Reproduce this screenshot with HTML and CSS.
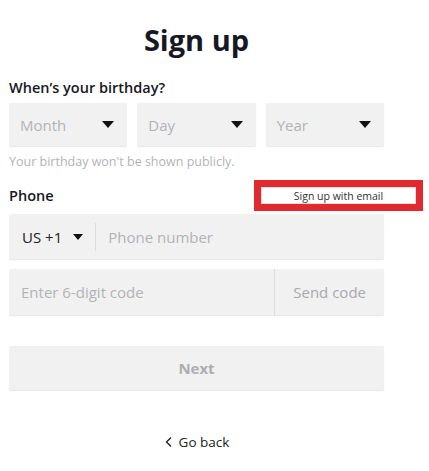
FILE: index.html
```html
<!DOCTYPE html>
<html lang="en">
<head>
  <meta charset="UTF-8" />
  <meta name="viewport" content="width=device-width, initial-scale=1.0" />
  <title>Sign up</title>
  <link rel="stylesheet" href="styles.css">
</head>
<body>
  <div class="page">
    <h1>Sign up</h1>

    <div class="label">When’s your birthday?</div>
    <div class="birthday">
      <div class="select"><span>Month</span><span class="caret"></span></div>
      <div class="select"><span>Day</span><span class="caret"></span></div>
      <div class="select"><span>Year</span><span class="caret"></span></div>
    </div>
    <div class="hint">Your birthday won't be shown publicly.</div>

    <div class="phone-head">
      <div class="label">Phone</div>
      <div class="email-link"><span>Sign up with email</span></div>
    </div>

    <div class="field">
      <div class="country">US +1 <span class="caret"></span></div>
      <div class="placeholder">Phone number</div>
    </div>

    <div class="field code">
      <div class="placeholder">Enter 6-digit code</div>
      <div class="send">Send code</div>
    </div>

    <button class="next">Next</button>

    <div class="back">
      <svg width="10" height="12" viewBox="0 0 10 12"><path d="M7 1.5 L2.5 6 L7 10.5" fill="none" stroke="#222" stroke-width="1.4"/></svg>
      Go back
    </div>
  </div>
</body>
</html>
```

FILE: styles.css
```css
:root {
  --field-bg: #f1f1f2;
  --field-edge: #e6e6e8;
  --muted: #b3b3b6;
  --text: #161823;
  --font: 'Open Sans', sans-serif;
}

body {
  margin: 0;
  font-family: var(--font);
  color: var(--text);
  background: white;
}

.page {
  width: 375px;
  padding: 0 9px;
}

h1 {
  margin: 21px 0 19px;
  font-size: 29px;
  font-weight: 700;
  text-align: center;
  line-height: 38px;
}

.label {
  font-size: 14.5px;
  font-weight: 600;
  line-height: 20px;
}

.birthday {
  display: flex;
  gap: 10px;
  margin-top: 5px;
}

.select {
  flex: 1;
  height: 43px;
  background: var(--field-bg);
  border-radius: 2px;
  box-shadow: 0 1px 1px var(--field-edge);
  display: flex;
  align-items: center;
  justify-content: space-between;
  padding: 0 13px 0 11px;
  color: var(--muted);
  font-size: 15px;
}

.caret {
  display: inline-block;
  width: 0;
  height: 0;
  border-left: 6px solid transparent;
  border-right: 6px solid transparent;
  border-top: 7px solid #111;
}

.hint {
  margin-top: 7px;
  font-size: 12.5px;
  color: var(--muted);
  line-height: 18px;
}

.phone-head {
  display: flex;
  justify-content: space-between;
  align-items: center;
  margin-top: 9px;
  margin-right: -39px;
}

.email-link {
  border: 7px solid #e12a2f;
  width: 155px;
  height: 17px;
  display: flex;
  align-items: center;
  justify-content: center;
  font-size: 10.5px;
  color: #333;
  box-shadow: inset 0 0 0 1px #ddd;
}

.field {
  margin-top: 3px;
  height: 45px;
  background: var(--field-bg);
  border-radius: 2px;
  box-shadow: 0 1px 1px var(--field-edge);
  display: flex;
  align-items: center;
  font-size: 15px;
}

.country {
  display: flex;
  align-items: center;
  gap: 11px;
  padding: 0 12px 0 13px;
  height: 28px;
  border-right: 1px solid #dcdcde;
  color: #222;
}

.country .caret {
  border-left-width: 5px;
  border-right-width: 5px;
  border-top-width: 6px;
}

.field .placeholder {
  color: var(--muted);
  padding-left: 12px;
  flex: 1;
}

.code {
  margin-top: 10px;
  height: 46px;
}

.send {
  height: 100%;
  display: flex;
  align-items: center;
  padding: 0 18px;
  border-left: 1px solid #dcdcde;
  color: #a9a9ad;
}

.next {
  display: block;
  width: 100%;
  height: 44px;
  margin-top: 31px;
  border: none;
  border-radius: 2px;
  background: var(--field-bg);
  box-shadow: 0 1px 1px var(--field-edge);
  font-family: var(--font);
  font-size: 15px;
  font-weight: 700;
  color: #adadb0;
}

.back {
  display: flex;
  align-items: center;
  justify-content: center;
  gap: 5px;
  margin-top: 43px;
  font-size: 13.5px;
  color: #222;
}
```
